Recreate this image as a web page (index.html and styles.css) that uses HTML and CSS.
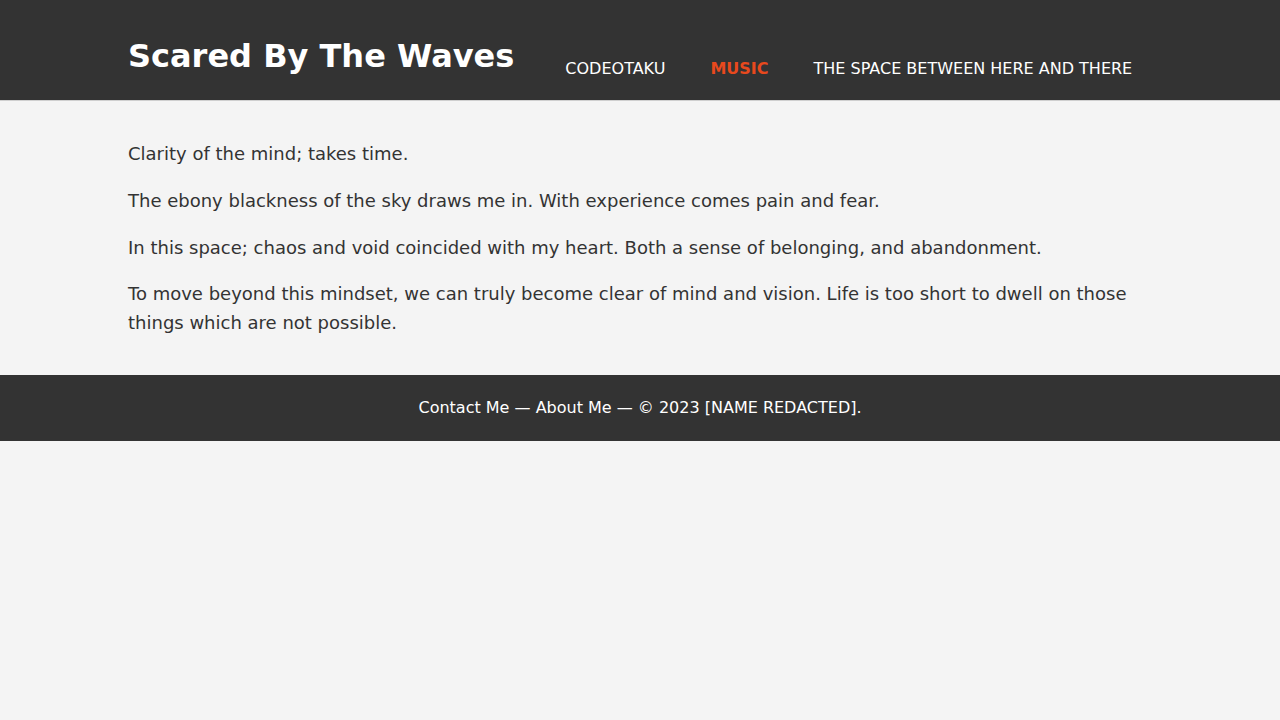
FILE: index.html
```html
<!DOCTYPE html>
<html lang="en">
<head>
<meta charset="utf-8">
<title>Scared By The Waves</title>
<link rel="stylesheet" href="styles.css">
</head>
<body>
<header class="site-header">
  <div class="container header-inner">
    <h1 class="brand">Scared By The Waves</h1>
    <nav class="nav">
      <a href="#" class="nav-link">CODEOTAKU</a>
      <a href="#" class="nav-link nav-link-active">MUSIC</a>
      <a href="#" class="nav-link">THE SPACE BETWEEN HERE AND THERE</a>
    </nav>
  </div>
</header>
<main class="container content">
  <p>Clarity of the mind; takes time.</p>
  <p>The ebony blackness of the sky draws me in. With experience comes pain and fear.</p>
  <p>In this space; chaos and void coincided with my heart. Both a sense of belonging, and abandonment.</p>
  <p>To move beyond this mindset, we can truly become clear of mind and vision. Life is too short to dwell on those things which are not possible.</p>
</main>
<footer class="site-footer">
  <p class="footer-text"><a href="#">Contact Me</a> — <a href="#">About Me</a> — © 2023 [NAME REDACTED].</p>
</footer>
</body>
</html>
```
FILE: styles.css
```css
html, body {
  margin: 0;
  padding: 0;
}
body {
  background: #f4f4f4;
  color: #333;
  font-family: "DejaVu Sans", sans-serif;
  font-size: 18px;
  line-height: 1.6;
}
.container {
  width: 1024px;
  margin: 0 auto;
}
.site-header {
  background: #333;
  height: 100px;
  border-bottom: 1px solid #cfcfcf;
}
.header-inner {
  height: 100%;
  display: flex;
  align-items: flex-end;
  box-sizing: border-box;
}
.brand {
  margin: 0 0 25px 0;
  font-size: 32px;
  line-height: normal;
  font-weight: bold;
  color: #fff;
}
.nav {
  display: flex;
  gap: 45px;
  margin-left: 51px;
  margin-bottom: 22px;
}
.nav-link {
  color: #fff;
  text-decoration: none;
  font-size: 16px;
  line-height: normal;
}
.nav-link-active {
  color: #e8491d;
  font-weight: bold;
}
.content {
  padding: 21px 0 19px;
}
.content p {
  margin: 18px 0;
}
.site-footer {
  background: #333;
  color: #fff;
  text-align: center;
  padding: 20px 0;
}
.footer-text {
  margin: 0;
  font-size: 16px;
  line-height: 1.6;
}
.footer-text a {
  color: #fff;
  text-decoration: none;
}
```
